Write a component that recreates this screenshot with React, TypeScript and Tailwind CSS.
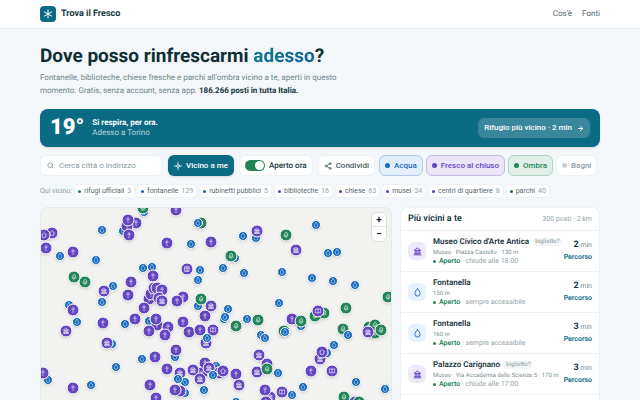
import { ArrowRight, Search, Share2 } from 'lucide-react';

type Kind = 'water' | 'church' | 'museum' | 'house' | 'book' | 'tree' | 'office';

const glyphs: Record<Kind, React.ReactNode> = {
  water: <path d="M12 2C9 6 5 10 5 14.500a7 7 0 0 0 14 0C19 10 15 6 12 2Z" />,
  church: <path d="M12 3v18M7 9h10" />,
  museum: <path d="M3 21h18M4 9h16L12 3ZM6 9v9M10 9v9M14 9v9M18 9v9M4 18h16" />,
  house: <path d="M4 11 12 4l8 7M6 10v10h12V10" />,
  book: <path d="M12 6C9 4 6 4 3 5v13c3-1 6-1 9 1 3-2 6-2 9-1V5c-3-1-6-1-9 1ZM12 6v13" />,
  tree: <path d="M12 22v-8M12 3 7 9h2l-4 7h14l-4-7h2Z" />,
  office: <path d="M5 4h14v16H5ZM5 10h14M9 7h1M14 7h1M9 20v-5h6v5" />,
};

function Glyph({ kind, className }: { kind: Kind; className: string }) {
  return (
    <svg
      viewBox="0 0 24 24"
      className={className}
      fill="none"
      stroke="currentColor"
      strokeWidth="2.4"
      strokeLinecap="round"
      strokeLinejoin="round"
    >
      {glyphs[kind]}
    </svg>
  );
}

// kind, x, y on the map; later pins lie over earlier ones
const pins: [Kind, number, number][] = [
  ['water', 103, 4], ['tree', 102, 0], ['water', 82, 23], ['church', 95, 15], ['church', 86, 18],
  ['church', 88, 27], ['church', 87, 12], ['house', 11, 25], ['house', 3, 27], ['church', 5, 40],
  ['water', 19, 48], ['church', 32, 44], ['water', 61, 22], ['water', 55, 52], ['tree', 33, 69],
  ['tree', 44, 74], ['water', 72, 78], ['museum', 63, 83], ['church', 90, 74], ['church', 87, 87],
  ['water', 102, 60], ['water', 111, 59], ['church', 112, 68], ['church', 108, 91], ['church', 110, 86],
  ['church', 113, 80], ['water', 61, 94], ['church', 135, 2], ['tree', 160, 15], ['water', 157, 15],
  ['church', 126, 35], ['water', 150, 36], ['church', 170, 34], ['water', 202, 28], ['water', 215, 30],
  ['museum', 216, 23], ['water', 194, 50], ['tree', 190, 48], ['office', 146, 61], ['water', 159, 62],
  ['water', 157, 72], ['water', 182, 60], ['water', 203, 65], ['church', 116, 80], ['church', 121, 82],
  ['museum', 118, 90], ['museum', 121, 93], ['church', 142, 89], ['church', 136, 93], ['water', 157, 98],
  ['tree', 160, 91], ['museum', 170, 98], ['water', 275, 17], ['tree', 245, 27], ['museum', 255, 42],
  ['water', 287, 45], ['water', 296, 44], ['water', 241, 64], ['water', 271, 70], ['water', 292, 73],
  ['water', 314, 77], ['tree', 347, 89], ['tree', 305, 100], ['water', 28, 97], ['church', 32, 102],
  ['water', 36, 114], ['museum', 25, 123], ['church', 62, 115], ['water', 84, 116], ['church', 94, 111],
  ['church', 103, 100], ['water', 108, 113], ['church', 116, 117], ['church', 115, 111], ['church', 108, 123],
  ['water', 71, 136], ['museum', 66, 135], ['water', 75, 159], ['water', 101, 151], ['church', 114, 149],
  ['church', 109, 177], ['church', 115, 190], ['water', 7, 172], ['church', 2, 165], ['church', 32, 180],
  ['water', 50, 177], ['church', 164, 108], ['water', 187, 101], ['water', 183, 111], ['water', 184, 109],
  ['tree', 195, 118], ['water', 206, 111], ['tree', 217, 112], ['church', 142, 114], ['church', 127, 119],
  ['church', 124, 127], ['church', 148, 124], ['church', 159, 122], ['book', 172, 122], ['museum', 165, 135],
  ['water', 166, 130], ['water', 134, 149], ['church', 135, 142], ['water', 220, 127], ['water', 224, 130],
  ['museum', 218, 147], ['church', 226, 156], ['museum', 216, 164], ['tree', 226, 161], ['water', 237, 165],
  ['church', 126, 161], ['museum', 139, 165], ['church', 161, 165], ['museum', 152, 162], ['church', 164, 155],
  ['water', 175, 158], ['museum', 168, 160], ['museum', 178, 165], ['water', 172, 167], ['house', 182, 163],
  ['museum', 159, 171], ['church', 195, 166], ['museum', 198, 177], ['water', 144, 174], ['water', 137, 171],
  ['water', 144, 185], ['church', 139, 183], ['church', 134, 182], ['water', 163, 182], ['museum', 229, 189],
  ['museum', 225, 194], ['church', 224, 182], ['water', 195, 194], ['water', 238, 95], ['church', 251, 111],
  ['water', 260, 118], ['tree', 260, 113], ['tree', 243, 123], ['water', 244, 124], ['tree', 274, 108],
  ['tree', 283, 105], ['book', 277, 103], ['tree', 302, 121], ['water', 307, 127], ['tree', 328, 119],
  ['tree', 334, 125], ['tree', 334, 117], ['tree', 340, 122], ['museum', 327, 124], ['water', 293, 137],
  ['water', 286, 145], ['museum', 279, 151], ['house', 281, 144], ['church', 270, 163], ['book', 291, 163],
  ['water', 315, 174], ['water', 344, 181], ['tree', 303, 189], ['museum', 314, 194], ['tree', 318, 194],
  ['water', 262, 179], ['book', 241, 184], ['water', 251, 187],
];

function Pin({ kind, x, y }: { kind: Kind; x: number; y: number }) {
  const size =
    kind === 'water'
      ? 'size-[10px] bg-[#1769bd]'
      : kind === 'tree'
        ? 'size-[13px] bg-[#24845a]'
        : 'size-[13px] bg-[#6547c2]';
  return (
    <span
      className={`absolute flex -translate-x-1/2 -translate-y-1/2 items-center justify-center rounded-full border border-white text-white/80 shadow-sm ${size}`}
      style={{ left: x, top: y }}
    >
      <Glyph kind={kind} className={kind === 'water' ? 'size-[6px]' : 'size-[7px]'} />
    </span>
  );
}

const chips = [
  { label: 'rifugi ufficiali', count: 3, dot: 'bg-[#1f7a50]' },
  { label: 'fontanelle', count: 129, dot: 'bg-[#1b5fae]' },
  { label: 'rubinetti pubblici', count: 5, dot: 'bg-[#1b5fae]' },
  { label: 'biblioteche', count: 16, dot: 'bg-[#5b3db8]' },
  { label: 'chiese', count: 63, dot: 'bg-[#5b3db8]' },
  { label: 'musei', count: 34, dot: 'bg-[#5b3db8]' },
  { label: 'centri di quartiere', count: 8, dot: 'bg-[#5b3db8]' },
  { label: 'parchi', count: 40, dot: 'bg-[#1f6a50]' },
];

const places = [
  { kind: 'museum' as Kind, name: "Museo Civico d'Arte Antica", ticket: true, info: 'Museo · Piazza Castello · 130 m', hours: 'chiude alle 18:00', min: 2 },
  { kind: 'water' as Kind, name: 'Fontanella', ticket: false, info: '150 m', hours: 'sempre accessibile', min: 2 },
  { kind: 'water' as Kind, name: 'Fontanella', ticket: false, info: '160 m', hours: 'sempre accessibile', min: 3 },
  { kind: 'museum' as Kind, name: 'Palazzo Carignano', ticket: true, info: 'Museo · Via Accademia delle Scienze 5 · 170 m', hours: 'chiude alle 17:00', min: 3 },
];

function Filter({ label, className, dot }: { label: string; className: string; dot: string }) {
  return (
    <button className={`flex h-[21px] shrink-0 items-center gap-1 rounded-md border px-[5px] font-medium ${className}`}>
      <span className={`size-[5px] rounded-full ${dot}`} />
      {label}
    </button>
  );
}

export default function App() {
  return (
    <div className="flex h-screen flex-col overflow-hidden bg-[#f3f7f9] font-['Roboto',sans-serif] text-[8px] leading-[10px] text-[#16343b] [text-rendering:geometricPrecision]">
      <header className="flex h-[29px] shrink-0 items-center justify-between border-b border-[#e3eaec] bg-white px-10">
        <a href="#" className="flex items-center gap-[5px] text-[9px] font-bold">
          <span className="flex size-4 items-center justify-center rounded bg-[#0c6b84] text-white">
            <svg viewBox="0 0 16 16" className="size-4" fill="none" stroke="currentColor" strokeWidth="1" strokeLinecap="round">
              <path d="M8 4v8M4.500 6l7 4M11.500 6l-7 4" />
            </svg>
          </span>
          Trova il Fresco
        </a>
        <nav className="flex gap-[10px] text-[#52676d]">
          <a href="#">Cos'è</a>
          <a href="#">Fonti</a>
        </nav>
      </header>

      <main className="flex min-h-0 flex-1 flex-col px-10 pt-[15px]">
        <h1 className="text-[19px] leading-6 font-bold text-[#0f2f34]">
          Dove posso rinfrescarmi{' '}
          <span className="bg-linear-to-r from-[#0d7888] to-[#0c6296] bg-clip-text text-transparent">adesso</span>?
        </h1>
        <p className="mt-[3px] max-w-[320px] text-[8px] leading-[13px] text-[#71858b]">
          Fontanelle, biblioteche, chiese fresche e parchi all'ombra vicino a te, aperti in questo
          <br />
          momento. Gratis, senza account, senza app.{' '}
          <strong className="font-bold text-[#16343b]">186.266 posti in tutta Italia.</strong>
        </p>

        <section className="mt-3 flex h-[38px] shrink-0 items-center rounded-lg bg-[#0c6b84] px-[10px] text-white shadow-sm">
          <span className="text-[22px] leading-6 font-black">19°</span>
          <div className="ml-2">
            <p className="font-bold">Si respira, per ora.</p>
            <p className="text-[#b5d4dc]">Adesso a Torino</p>
          </div>
          <button className="ml-auto flex h-5 items-center gap-[5px] rounded-md bg-[#3a879c] px-[6px] font-medium">
            Rifugio più vicino · 2 min
            <ArrowRight className="size-[7px]" strokeWidth={3} />
          </button>
        </section>

        <div className="mt-2 flex items-center whitespace-nowrap">
          <label className="flex h-[21px] w-[122px] shrink-0 items-center gap-[5px] rounded-md border border-[#edf2f3] bg-white px-[6px] text-[#71858b]">
            <Search className="size-[7px] shrink-0" strokeWidth={2.4} />
            <input
              type="text"
              aria-label="Cerca città o indirizzo"
              placeholder="Cerca città o indirizzo"
              className="w-full min-w-0 outline-none placeholder:text-[#8b9a9f]"
            />
          </label>
          <button className="ml-[6px] flex h-[21px] shrink-0 items-center gap-1 rounded-md bg-[#0c6b84] px-[6px] font-medium text-white shadow-sm">
            <svg viewBox="0 0 24 24" className="size-2" fill="none" stroke="currentColor" strokeWidth="2.200" strokeLinecap="round">
              <circle cx="12" cy="12" r="4" />
              <path d="M12 1v7M12 16v7M1 12h7M16 12h7" />
            </svg>
            Vicino a me
          </button>
          <label className="ml-[5px] flex h-[21px] shrink-0 items-center gap-1 rounded-md border border-[#edf2f3] bg-white px-[5px] font-medium">
            <input
              type="checkbox"
              defaultChecked
              className="flex h-[11px] w-5 appearance-none items-center rounded-full bg-[#238455] px-px before:size-[9px] before:rounded-full before:bg-white checked:justify-end"
            />
            Aperto ora
          </label>
          <button className="ml-[5px] flex h-[21px] shrink-0 items-center gap-1 rounded-md border border-[#edf2f3] bg-white px-[5px] font-medium text-[#455b61]">
            <Share2 className="size-2" strokeWidth={2.2} />
            Condividi
          </button>
          <div className="ml-1 flex gap-[3px]">
            <Filter label="Acqua" dot="bg-[#1769bd]" className="border-[#b3cbe8] bg-[#e2eefb] text-[#1769bd]" />
            <Filter label="Fresco al chiuso" dot="bg-[#6547c2]" className="border-[#c7bce6] bg-[#ebe5fa] text-[#6547c2]" />
            <Filter label="Ombra" dot="bg-[#24845a]" className="border-[#b0d3c2] bg-[#e0f0e8] text-[#24845a]" />
            <Filter label="Bagni" dot="bg-[#ccd3d6]" className="border-[#edf2f3] bg-white text-[#8d9a9f]" />
          </div>
        </div>

        <div className="mt-2 flex items-center gap-[2px] text-[7px] whitespace-nowrap">
          <span className="text-[#8b9a9f]">Qui vicino:</span>
          {chips.map((c) => (
            <button key={c.label} className="flex h-[14px] items-center gap-[3px] rounded border border-[#edf2f3] bg-white px-[3px] text-[#52676d]">
              <span className={`size-[3px] rounded-full ${c.dot}`} />
              {c.label}
              <span className="text-[#93a2a7]">{c.count}</span>
            </button>
          ))}
        </div>

        <div className="mt-[9px] grid min-h-0 flex-1 grid-cols-[minmax(0,1fr)_200px] gap-2">
          <div className="relative overflow-hidden rounded-t-lg border border-b-0 border-[#e3eaec] bg-[#f2f2f0]">
            {pins.map(([kind, x, y], i) => (
              <Pin key={i} kind={kind} x={x} y={y} />
            ))}
            <div className="absolute top-1 right-1 flex w-4 flex-col rounded-md border border-[#dcdcda] bg-white text-[10px] font-bold text-[#222]">
              <button aria-label="Ingrandisci" className="h-[14px] border-b border-[#e4e4e4]">+</button>
              <button aria-label="Riduci" className="h-[14px]">−</button>
            </div>
          </div>

          <aside className="overflow-hidden rounded-t-lg border border-b-0 border-[#edf2f3] bg-white">
            <div className="flex h-[23px] items-center justify-between border-b border-[#edf2f3] px-[7px]">
              <h2 className="text-[9px] font-semibold">Più vicini a te</h2>
              <span className="text-[7px] text-[#93a2a7]">300 posti · 2 km</span>
            </div>
            <ul>
              {places.map((p, i) => (
                <li key={i} className="flex h-[41px] items-center gap-[7px] border-b border-[#edf2f3] px-[7px]">
                  <span
                    className={`flex size-[18px] shrink-0 items-center justify-center rounded-md ${
                      p.kind === 'water' ? 'bg-[#e8f2fc] text-[#1769bd]' : 'bg-[#eee8fb] text-[#6547c2]'
                    }`}
                  >
                    <Glyph kind={p.kind} className="size-[9px]" />
                  </span>
                  <div className="min-w-0 flex-1 text-[7px] leading-[9px] whitespace-nowrap">
                    <h3 className="flex items-center gap-1 text-[8px] leading-3 font-semibold">
                      {p.name}
                      {p.ticket && (
                        <span className="rounded-sm bg-[#f3f6f7] px-[2px] text-[6px] leading-2 font-normal text-[#8b9a9f]">biglietto?</span>
                      )}
                    </h3>
                    <p className="text-[6px] text-[#7b8d92]">{p.info}</p>
                    <p className="flex items-center gap-[3px] text-[#93a2a7]">
                      <span className="size-[3px] rounded-full bg-[#24845a]" />
                      <span>
                        <b className="font-semibold text-[#24845a]">Aperto</b> · {p.hours}
                      </span>
                    </p>
                  </div>
                  <div className="shrink-0 text-right text-[7px] leading-3">
                    <p className="text-[#7b8d92]">
                      <b className="text-[9px] font-bold text-[#16343b]">{p.min}</b> min
                    </p>
                    <a href="#" className="block font-semibold text-[#0c6b84]">Percorso</a>
                  </div>
                </li>
              ))}
            </ul>
          </aside>
        </div>
      </main>
    </div>
  );
}
